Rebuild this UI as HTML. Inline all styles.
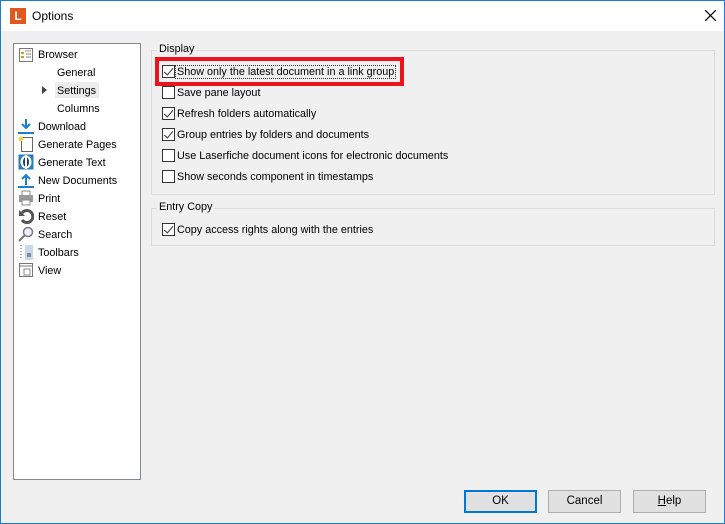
<!DOCTYPE html>
<html><head><meta charset="utf-8"><style>
*{margin:0;padding:0;box-sizing:border-box}
body{width:725px;height:524px;overflow:hidden;font-family:"Liberation Sans",sans-serif;font-size:10.8px;color:#000;background:#f0f0f0;position:relative}
.win{position:absolute;left:0;top:0;width:725px;height:524px;border:1px solid #1a7fd4;background:#f0f0f0}
.title{position:absolute;left:0;top:0;width:723px;height:30px;background:#fff}
.logo{position:absolute;left:9px;top:7px;width:16px;height:16px;background:#e2571e;color:#fff;font-weight:bold;font-size:12px;text-align:center;line-height:16px}
.abs{position:absolute;white-space:nowrap}
.list{position:absolute;left:12px;top:42px;width:128px;height:437px;background:#fff;border:1px solid #828790}
.grp{position:absolute;border:1px solid #dcdcdc}
.lg{position:absolute;background:#f0f0f0;padding:0 2px;top:-8px;left:5px}
.cb{position:absolute;left:161px;width:13px;height:13px;border:1px solid #333;background:#fff}
.cb.c::after{content:"";position:absolute;left:3px;top:0px;width:4px;height:8px;border:solid #333;border-width:0 1.5px 1.5px 0;transform:rotate(40deg)}
.lbl{position:absolute;left:176px;white-space:nowrap;margin-top:1px}
.btn{position:absolute;top:489px;width:73px;height:23px;background:#e1e1e1;border:1px solid #adadad;text-align:center;line-height:21px;font-size:11.5px}
.ic{position:absolute;left:17px;width:16px;height:16px}
.t{margin-top:1px}
</style></head><body>
<div class="win">
<div class="title"><div class="logo">L</div><div class="abs" style="left:31px;top:8px;font-size:12px">Options</div>
<svg class="abs" style="left:704px;top:9px" width="11" height="11"><path d="M0 0L11 11M11 0L0 11" stroke="#000" stroke-width="1.2"/></svg></div>

<div class="list"></div>
<svg class="ic" style="top:46px" viewBox="0 0 16 16"><rect x="1.5" y="1.5" width="13" height="13" fill="#fff" stroke="#777"/><rect x="3" y="5" width="3" height="2" fill="#c8a020"/><rect x="3" y="9" width="3" height="2" fill="#c8a020"/><path d="M7 4h6M8 7h5M8 10h5" stroke="#888"/></svg>
<div class="abs t" style="left:37px;top:47px">Browser</div>
<div class="abs t" style="left:56px;top:65px">General</div>
<div class="abs" style="left:41px;top:85px;width:0;height:0;border-left:5px solid #444;border-top:4px solid transparent;border-bottom:4px solid transparent"></div>
<div class="abs" style="left:54px;top:81px;width:44px;height:16px;background:#ececec"></div>
<div class="abs t" style="left:56px;top:83px">Settings</div>
<div class="abs t" style="left:56px;top:101px">Columns</div>
<svg class="ic" style="top:117px" viewBox="0 0 16 16"><path d="M8 1v9M4 6l4 4 4-4" stroke="#1a7fd4" stroke-width="2" fill="none"/><rect x="0" y="14" width="16" height="2" fill="#1a7fd4"/></svg>
<div class="abs t" style="left:37px;top:119px">Download</div>
<svg class="ic" style="top:135px" viewBox="0 0 16 16"><rect x="3.5" y="1.5" width="11" height="14" fill="#fff" stroke="#666"/><circle cx="3" cy="3" r="2.5" fill="#f5d040"/></svg>
<div class="abs t" style="left:37px;top:137px">Generate Pages</div>
<svg class="ic" style="top:153px" viewBox="0 0 16 16"><rect x="0.5" y="0.5" width="15" height="15" fill="#2a7fb8"/><ellipse cx="8" cy="8" rx="5.5" ry="6.5" fill="#fff"/><ellipse cx="8" cy="8" rx="3" ry="5" fill="#1a3e60"/><rect x="7" y="1" width="2" height="14" fill="#fff"/></svg>
<div class="abs t" style="left:37px;top:155px">Generate Text</div>
<svg class="ic" style="top:171px" viewBox="0 0 16 16"><path d="M8 13V3M4 7l4-4 4 4" stroke="#1a7fd4" stroke-width="2" fill="none"/><rect x="0" y="14" width="16" height="2" fill="#1a7fd4"/></svg>
<div class="abs t" style="left:37px;top:173px">New Documents</div>
<svg class="ic" style="top:189px" viewBox="0 0 16 16"><rect x="4" y="1" width="8" height="5" fill="#fff" stroke="#888"/><rect x="1" y="5" width="14" height="7" fill="#999"/><rect x="4" y="10" width="8" height="5" fill="#fff" stroke="#888"/></svg>
<div class="abs t" style="left:37px;top:191px">Print</div>
<svg class="ic" style="top:207px" viewBox="0 0 16 16"><path d="M4 5A6 6 0 1 1 4 12" stroke="#555" stroke-width="3" fill="none"/><path d="M1 2v6h6z" fill="#555"/></svg>
<div class="abs t" style="left:37px;top:209px">Reset</div>
<svg class="ic" style="top:225px" viewBox="0 0 16 16"><circle cx="10" cy="6" r="4.5" fill="#eef" stroke="#777" stroke-width="1.5"/><path d="M7 9L1 15" stroke="#777" stroke-width="2"/></svg>
<div class="abs t" style="left:37px;top:227px">Search</div>
<svg class="ic" style="top:243px" viewBox="0 0 16 16"><path d="M3 1v14" stroke="#555" stroke-dasharray="1 2"/><rect x="7" y="1" width="8" height="15" fill="#c9d9ea"/><path d="M9 10h4M9 12h4" stroke="#345"/></svg>
<div class="abs t" style="left:37px;top:245px">Toolbars</div>
<svg class="ic" style="top:261px" viewBox="0 0 16 16"><rect x="1.5" y="1.5" width="13" height="13" fill="#fff" stroke="#777"/><path d="M2 4h12" stroke="#777"/><rect x="6" y="7" width="6" height="6" fill="none" stroke="#888"/></svg>
<div class="abs t" style="left:37px;top:263px">View</div>

<div class="grp" style="left:150px;top:49px;width:564px;height:145px"><div class="lg">Display</div></div>
<div class="grp" style="left:150px;top:207px;width:564px;height:38px"><div class="lg">Entry Copy</div></div>
<div class="abs" style="left:154px;top:56px;width:249px;height:29px;border:4px solid #e8151f"></div>
<div class="cb c" style="top:64px"></div><div class="lbl" style="top:64px;outline:1px dotted #333;padding:0 1px;left:175px">Show only the latest document in a link group</div>
<div class="cb" style="top:85px"></div><div class="lbl" style="top:85px">Save pane layout</div>
<div class="cb c" style="top:106px"></div><div class="lbl" style="top:106px">Refresh folders automatically</div>
<div class="cb c" style="top:127px"></div><div class="lbl" style="top:127px">Group entries by folders and documents</div>
<div class="cb" style="top:148px"></div><div class="lbl" style="top:148px">Use Laserfiche document icons for electronic documents</div>
<div class="cb" style="top:169px"></div><div class="lbl" style="top:169px">Show seconds component in timestamps</div>
<div class="cb c" style="top:222px"></div><div class="lbl" style="top:222px">Copy access rights along with the entries</div>

<div class="btn" style="left:463px;border:2px solid #0078d7;line-height:19px">OK</div>
<div class="btn" style="left:547px">Cancel</div>
<div class="btn" style="left:632px"><u>H</u>elp</div>
</div>
</body></html>
